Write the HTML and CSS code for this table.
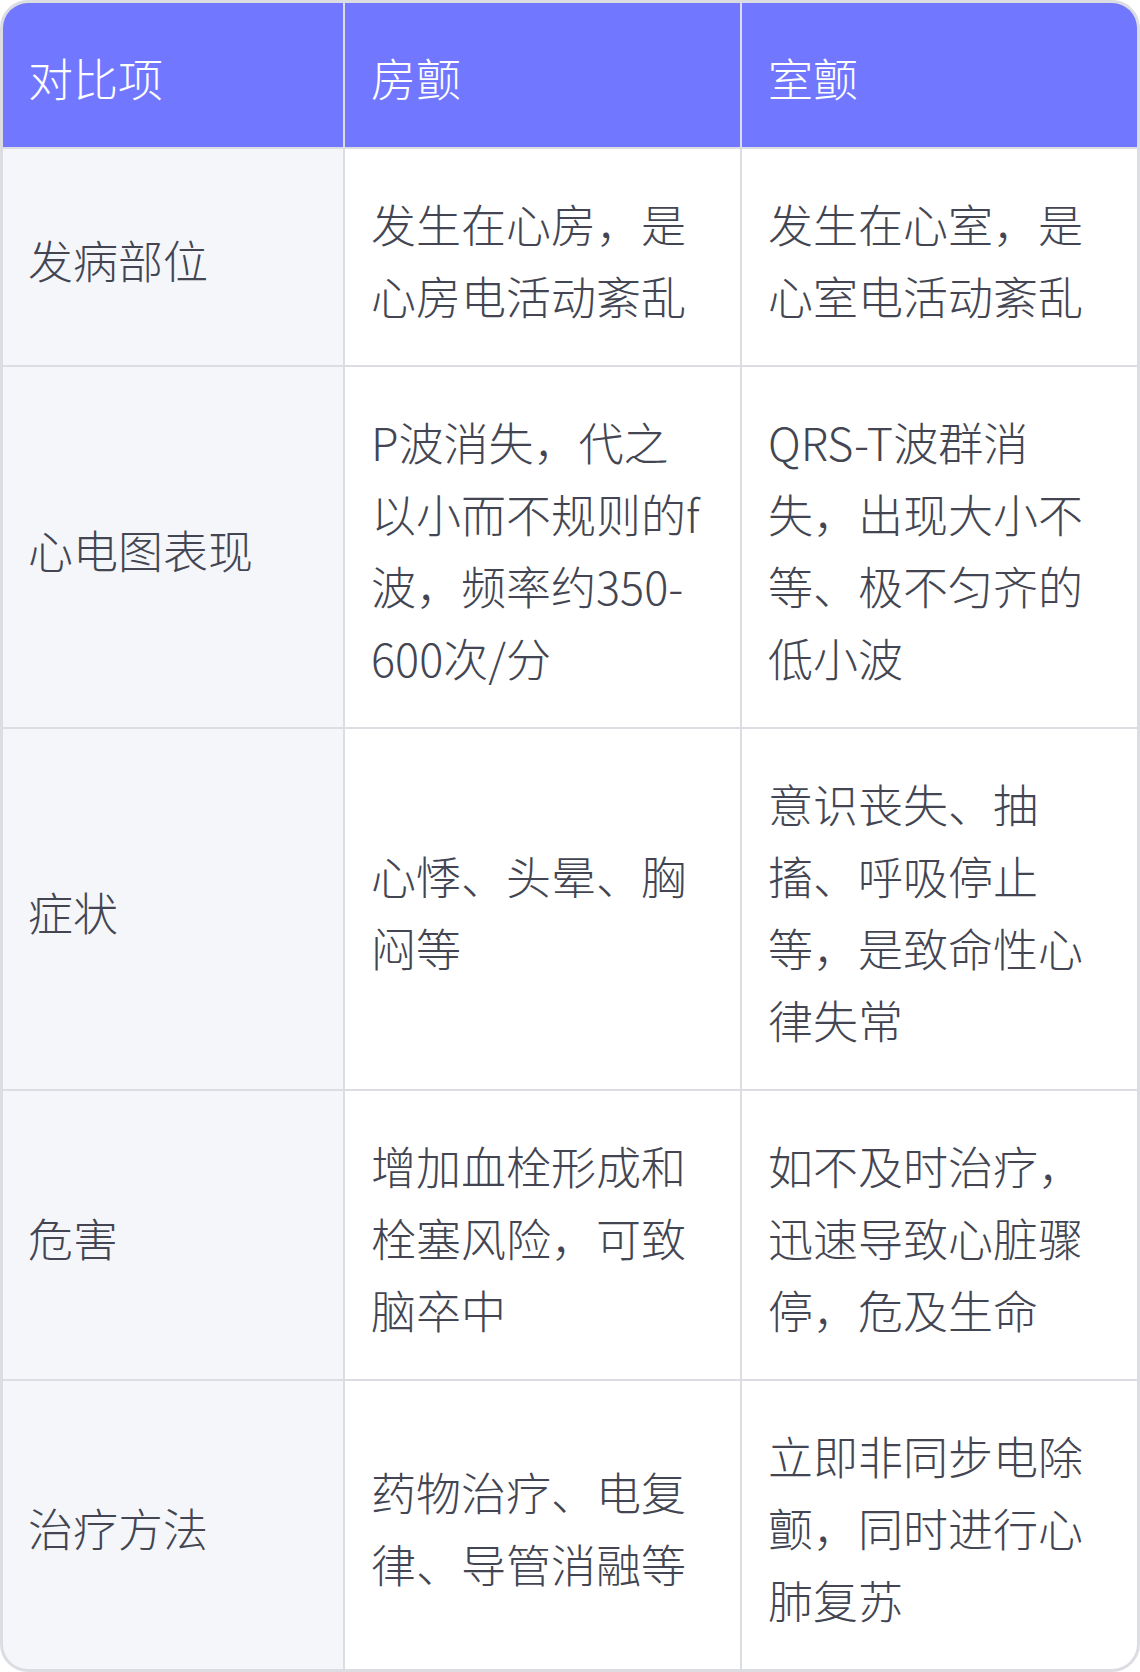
FILE: index.html
```html
<!DOCTYPE html>
<html lang="zh-CN">
<head>
<meta charset="utf-8">
<title>房颤与室颤对比</title>
<link rel="stylesheet" href="styles.css">
</head>
<body>
<div class="compare">
  <div class="cell head label-col">对比项</div>
  <div class="cell head">房颤</div>
  <div class="cell head">室颤</div>

  <div class="cell label label-col">发病部位</div>
  <div class="cell">发生在心房，是心房电活动紊乱</div>
  <div class="cell">发生在心室，是心室电活动紊乱</div>

  <div class="cell label label-col">心电图表现</div>
  <div class="cell">P波消失，代之以小而不规则的f波，频率约350-600次/分</div>
  <div class="cell">QRS-T波群消失，出现大小不等、极不匀齐的低小波</div>

  <div class="cell label label-col">症状</div>
  <div class="cell">心悸、头晕、胸闷等</div>
  <div class="cell">意识丧失、抽搐、呼吸停止等，是致命性心律失常</div>

  <div class="cell label label-col">危害</div>
  <div class="cell">增加血栓形成和栓塞风险，可致脑卒中</div>
  <div class="cell">如不及时治疗，迅速导致心脏骤停，危及生命</div>

  <div class="cell label label-col">治疗方法</div>
  <div class="cell">药物治疗、电复律、导管消融等</div>
  <div class="cell">立即非同步电除颤，同时进行心肺复苏</div>
</div>
</body>
</html>
```

FILE: styles.css
```css
html, body {
  margin: 0;
  padding: 0;
  background: #ffffff;
}

.compare {
  box-sizing: border-box;
  width: 1140px;
  display: grid;
  grid-template-columns: 340px 1fr 1fr;
  gap: 2px;
  background: #dcdde2;
  border: 3px solid #dcdde2;
  border-radius: 28px;
  overflow: hidden;
  font-family: "Noto Sans CJK SC", "Noto Sans", sans-serif;
  font-weight: 300;
  font-size: 45px;
  line-height: 72px;
  color: #434652;
}

.cell {
  display: flex;
  align-items: center;
  padding: 39px 29px 33px 26px;
  background: #ffffff;
}

.cell.label-col {
  padding-left: 25px;
}

.cell.head {
  background: #7177ff;
  color: #ffffff;
}

.cell.label {
  background: #f5f6fa;
}
```
